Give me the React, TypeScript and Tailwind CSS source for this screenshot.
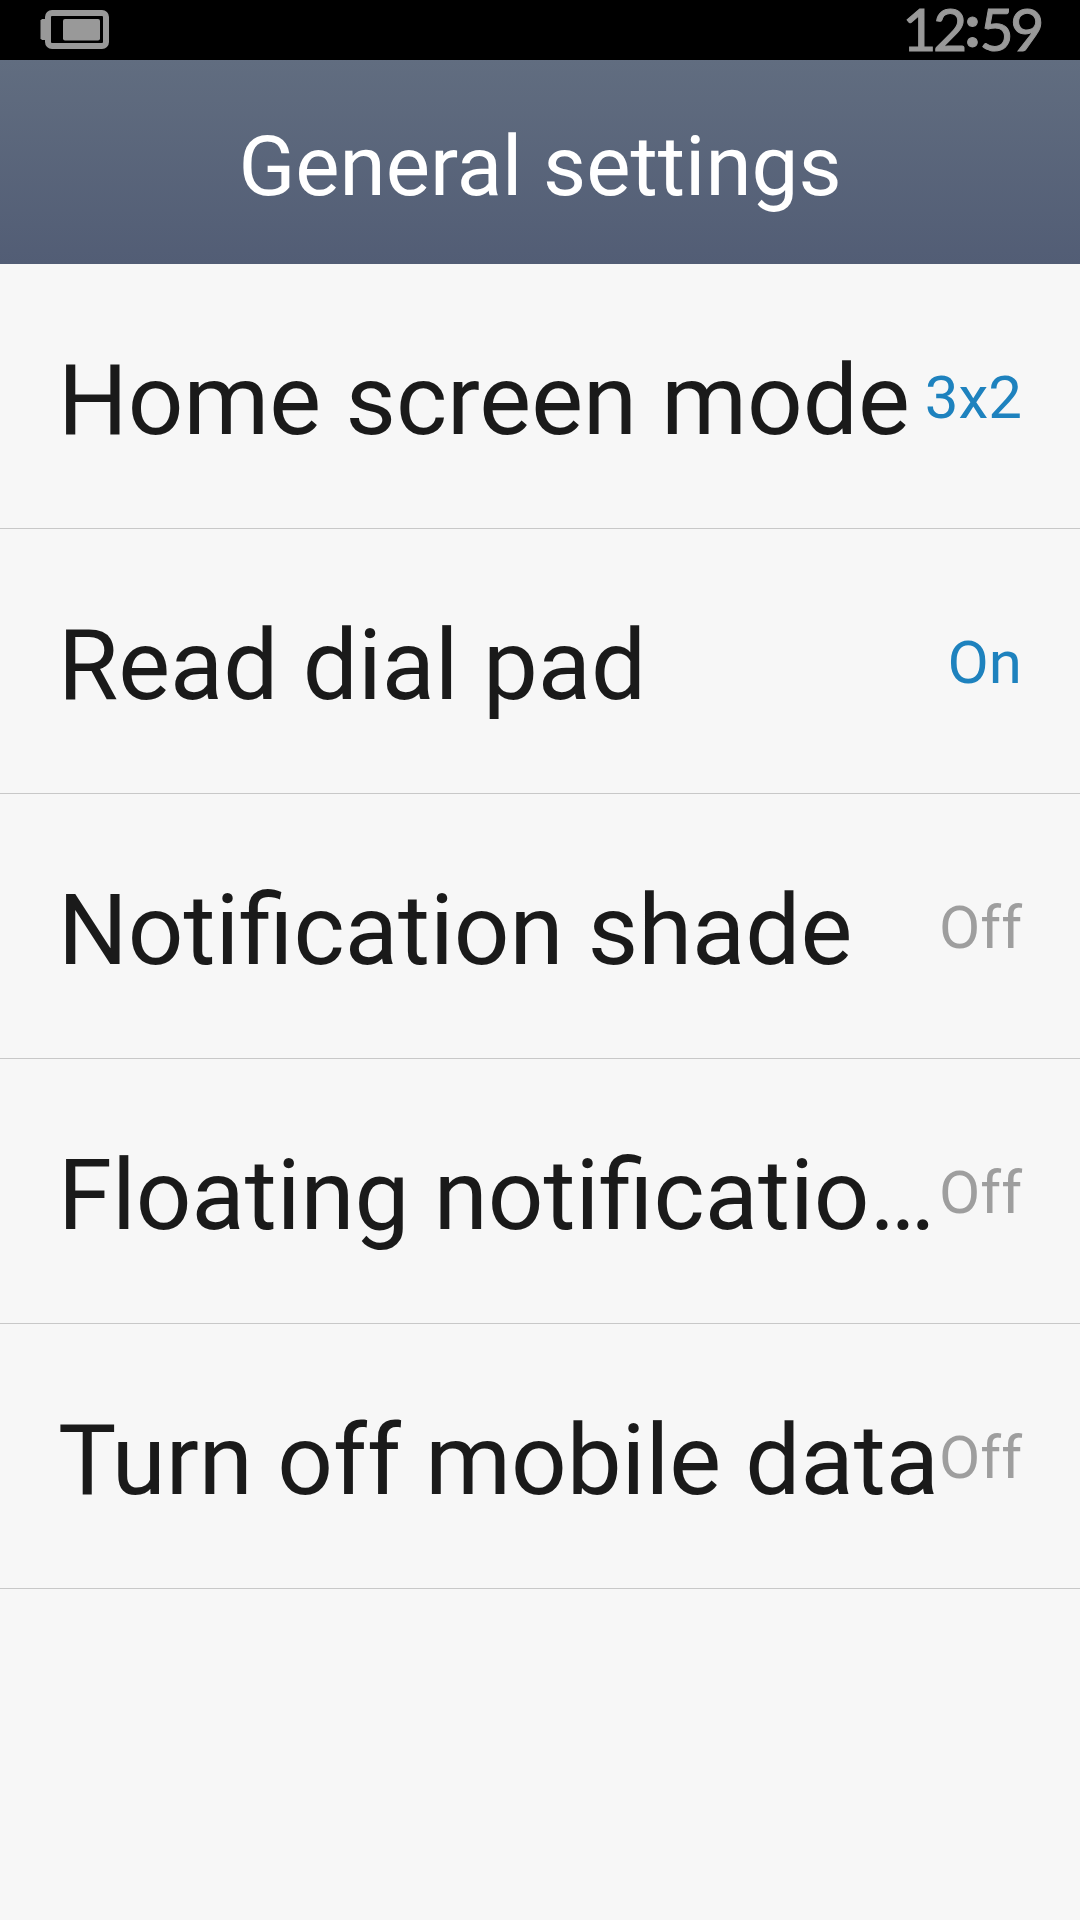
interface Setting {
  label: string;
  value: string;
  active: boolean;
}

const settings: Setting[] = [
  { label: 'Home screen mode', value: '3x2', active: true },
  { label: 'Read dial pad', value: 'On', active: true },
  { label: 'Notification shade', value: 'Off', active: false },
  { label: 'Floating notificatio…', value: 'Off', active: false },
  { label: 'Turn off mobile data', value: 'Off', active: false },
];

function BatteryIcon() {
  return (
    <svg className="ml-10 h-[60px] w-[70px]" viewBox="0 0 70 60" fill="none">
      <rect x="8" y="13" width="58" height="33" rx="4" stroke="#999" strokeWidth="6" />
      <path d="M2 19h4v21H2l-1.500-1.500v-18z" fill="#999" />
      <rect x="23" y="19" width="37" height="21.500" rx="2" fill="#999" />
    </svg>
  );
}

function StatusBar() {
  return (
    <div className="flex h-[60px] items-center justify-between bg-black">
      <BatteryIcon />
      <span className="mr-[39px] pb-0.5 font-[Lato,sans-serif] text-[59px] leading-[58px] tracking-[-3.500px] text-[#999] [-webkit-text-stroke:1px_#999]">
        12<span className="relative -top-1 mr-[3px] ml-px font-black">:</span>59
      </span>
    </div>
  );
}

function SettingRow({ label, value, active }: Setting) {
  return (
    <div className="flex h-[265px] items-center justify-between border-b border-[#c8c8c8] pr-[58px] pl-[58px] whitespace-nowrap">
      <span className="pt-2.5 text-[97.800px] leading-[116px] text-[#1a1a1a]">{label}</span>
      <span className={`pt-1 text-[60px] leading-[72px] ${active ? 'text-[#1e82be]' : 'text-[#9e9e9e]'}`}>
        {value}
      </span>
    </div>
  );
}

export default function App() {
  return (
    <div className="h-[1920px] w-[1080px] overflow-hidden bg-[#f7f7f7] font-[Roboto,sans-serif]">
      <StatusBar />
      <header className="flex h-[204px] items-center justify-center bg-linear-to-b from-[#616d80] to-[#525d75]">
        <h1 className="pt-[9px] text-[83.500px] leading-[100px] text-white">General settings</h1>
      </header>
      <main>
        {settings.map((setting) => (
          <SettingRow key={setting.label} {...setting} />
        ))}
      </main>
    </div>
  );
}
